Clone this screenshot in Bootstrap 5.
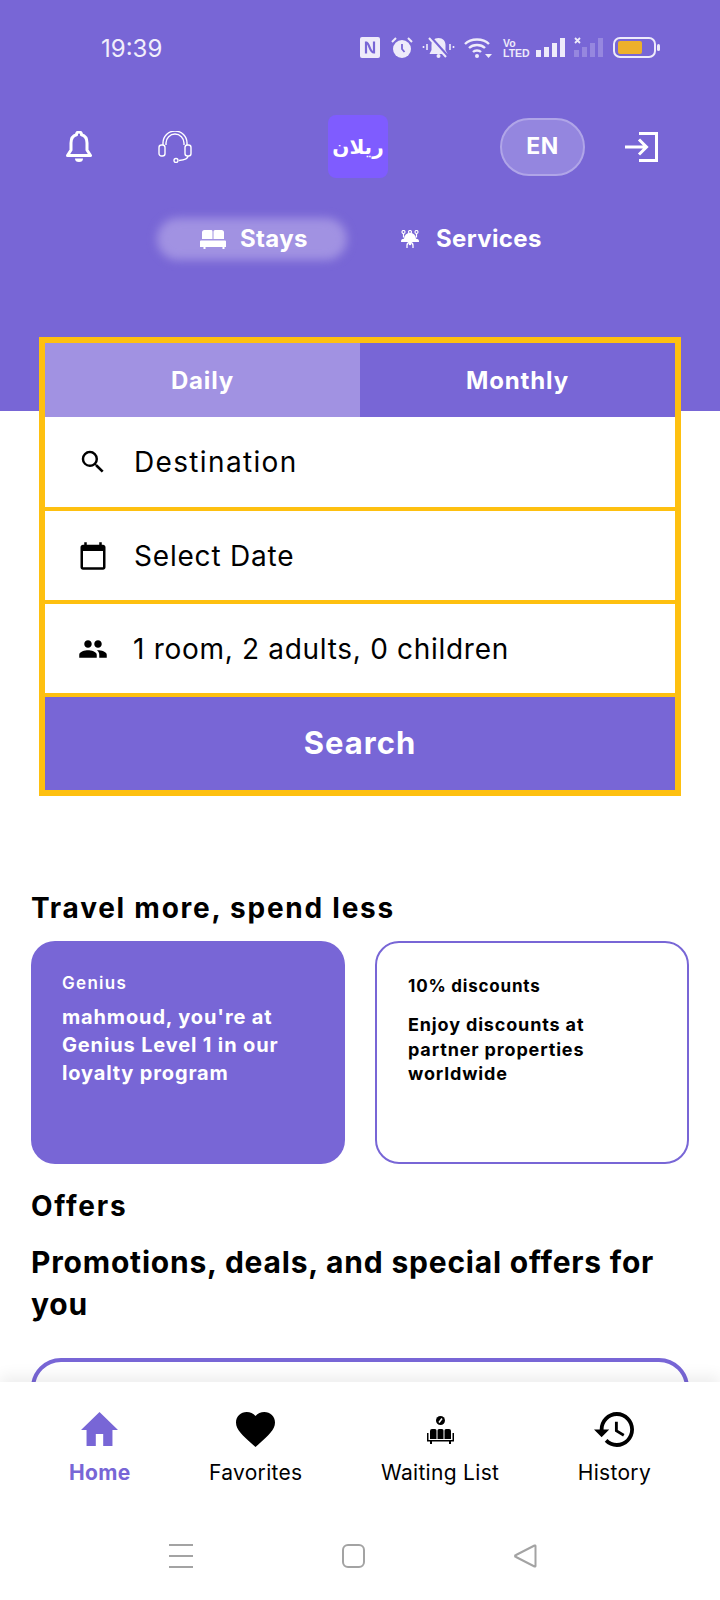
<!DOCTYPE html>
<html lang="en">
<head>
  <meta charset="UTF-8">
  <meta name="viewport" content="width=device-width, initial-scale=1.0">
  <title>Stays</title>
  <link rel="stylesheet" href="https://cdn.jsdelivr.net/npm/bootstrap@5.3.0/dist/css/bootstrap.min.css">
  <style>
    :root { --violet: #7866d6; --violet-light: #a192e2; --amber: #fec010; }
    body { font-family: Inter, "Open Sans", sans-serif; background: #fff; color: #000; }
    .app-shell { width: 720px; height: 1600px; overflow: hidden; }
    .app-main { flex: 1 1 auto; min-height: 0; overflow: hidden; }
    .hero { height: 411px; background: var(--violet); color: #fff; }
    .status-row { padding: 37px 60px 0 101px; height: 58px; }
    .status-time { font-size: 24px; line-height: 22px; width: 259px; padding-top: 2px; color: #f1eefb; flex: none; }
    .status-row svg { display: block; flex: none; }
    .lte-mark { width: 23px; margin-left: 11px; font: 700 10.500px/10px "Liberation Sans", sans-serif; color: #eeebfa; }
    .top-row { padding-left: 66px; margin-top: 57px; height: 63px; }
    .ic-bell { width: 26px; height: 31px; }
    .ic-headset { width: 34px; height: 32px; margin-left: 66px; }
    .logo-box { width: 60px; height: 63px; margin-left: 136px; background: #7f5cff; border-radius: 8px; font: 700 20px/1 "DejaVu Sans", sans-serif; }
    .lang-pill { width: 85px; height: 58px; margin-left: 112px; border-radius: 29px; background: #9486df; border: 2px solid #b0a5e8; font-size: 23px; font-weight: 700; letter-spacing: .6px; }
    .ic-login { width: 33px; height: 30px; margin-left: 40px; }
    .type-row { padding-left: 157px; margin-top: 39px; height: 44px; font-size: 24px; font-weight: 700; letter-spacing: .35px; }
    .type-on { position: relative; width: 190px; height: 44px; padding-left: 43px; gap: 14px; }
    .type-on::before { content: ""; position: absolute; inset: 1px 0; border-radius: 22px; background: var(--violet-light); filter: blur(5px); }
    .type-on > * { position: relative; }
    .type-off { margin-left: 53px; gap: 16px; }
    .search-box { width: 642px; margin: -74px 0 0 39px; border: 6px solid var(--amber); position: relative; background: #fff; }
    .term-tab { width: 50%; height: 74px; padding-top: 2px; background: var(--violet); color: #fff; font-size: 24px; font-weight: 700; letter-spacing: .85px; }
    .term-tab.on { background: var(--violet-light); }
    .field-row { height: 94px; padding-left: 33px; font-size: 28px; gap: 26px; border-bottom: 4px solid var(--amber); letter-spacing: 1.350px; }
    .field-row.slim { height: 93px; letter-spacing: .8px; }
    .field-row.tight { letter-spacing: .7px; gap: 25px; }
    .field-ico { width: 30px; display: flex; justify-content: center; flex: none; }
    .go-btn { height: 93px; background: var(--violet); color: #fff; font-size: 31px; font-weight: 700; border: 0; border-radius: 0; letter-spacing: 1px; }
    .go-btn:hover { background: var(--violet); color: #fff; }
    .sect { padding: 0 31px; margin-top: 95px; }
    .sect-title { font-size: 28px; line-height: 34px; font-weight: 700; margin: 0; letter-spacing: 1.750px; }
    .sect-title.next { margin-top: 25px; }
    .perk-grid { gap: 30px; margin-top: 16px; }
    .perk { width: 314px; height: 223px; border-radius: 24px; font-weight: 700; }
    .perk-fill { background: var(--violet); color: #fff; padding: 30px 31px; }
    .perk-line { border: 2px solid var(--violet); padding: 31px 40px 31px 31px; }
    .perk-tag { font-size: 17px; line-height: 24px; margin-bottom: 8px; font-weight: 600; letter-spacing: 1.300px; }
    .perk-line .perk-tag { margin-bottom: 15px; font-weight: 700; letter-spacing: .8px; }
    .perk-body { font-size: 20px; line-height: 28px; letter-spacing: .85px; }
    .perk-line .perk-body { font-size: 18px; line-height: 24.500px; letter-spacing: .85px; }
    .promo-title { font-size: 30px; line-height: 42px; font-weight: 700; margin: 18px 0 0; letter-spacing: .8px; }
    .promo-card { height: 120px; margin-top: 33px; border: 4px solid var(--violet); border-radius: 30px; }
    .tabbar { flex: none; height: 218px; background: #fff; box-shadow: 0 -6px 14px rgba(0, 0, 0, .07); position: relative; }
    .tab-list { padding: 30px 69px 0 69px; }
    .tab-item { font-size: 21px; line-height: 24px; letter-spacing: .3px; }
    .tab-item svg { display: block; }
    .tab-ico { height: 36px; margin-bottom: 13px; }
    .tab-item.on { color: var(--violet); font-weight: 700; }
    .sys-nav { padding-left: 169px; margin-top: 59px; }
    .sys-nav svg { display: block; flex: none; }
    .sys-gap { margin-left: 149px; }
  </style>
</head>
<body>
  <div class="app-shell d-flex flex-column">
    <div class="app-main">
      <div class="hero">
        <div class="status-row d-flex align-items-center">
          <div class="status-time">19:39</div>
          <svg width="20" height="21" viewBox="0 0 20 21"><rect width="20" height="21" rx="2" fill="#eeebfa"/><path d="M6 4.500v12M6 5.500c4 0 3 10 8 10M14 4.500v12" stroke="#7866d6" stroke-width="2.200" fill="none"/></svg>
          <svg style="margin-left:11px" width="22" height="21" viewBox="0 0 22 21"><circle cx="11" cy="12" r="9" fill="#eeebfa"/><path d="M11 7v5l2.500 3" stroke="#7866d6" stroke-width="1.800" fill="none"/><path d="M1 5l4-4M21 5l-4-4" stroke="#eeebfa" stroke-width="2"/></svg>
          <svg style="margin-left:9px" width="33" height="21" viewBox="0 0 33 21"><path d="M16.500 1c-4.500 0-7 3-7 7v5l-2 4h18l-2-4V8c0-4-2.500-7-7-7z" fill="#eeebfa"/><circle cx="16.500" cy="19" r="2" fill="#eeebfa"/><path d="M8 0l17 19" stroke="#7866d6" stroke-width="3.500"/><path d="M7 1l17 19" stroke="#eeebfa" stroke-width="2"/><path d="M5 7v6M1.500 9v2M28 7v6M31.500 9v2" stroke="#eeebfa" stroke-width="1.600"/></svg>
          <svg style="margin-left:9px" width="28" height="21" viewBox="0 0 28 21"><path d="M1 7c6-6 18-6 24 0M5 11c4-4 12-4 16 0M9 15c2-2 6-2 8 0" stroke="#eeebfa" stroke-width="2.400" fill="none"/><circle cx="13" cy="19" r="2" fill="#eeebfa"/><path d="M21 17h7l-3.500 4z" fill="#eeebfa"/></svg>
          <div class="lte-mark">Vo<br>LTED</div>
          <svg style="margin-left:10px" width="29" height="21" viewBox="0 0 29 21"><path d="M0 13h5v7H0zM8 10h5v10H8zM16 6h5v14h-5zM24 1h5v19h-5z" fill="#eeebfa"/></svg>
          <svg style="margin-left:9px" width="29" height="21" viewBox="0 0 29 21"><path d="M0 13h5v7H0zM8 10h5v10H8zM16 6h5v14h-5zM24 1h5v19h-5z" fill="#eeebfa" opacity=".25"/><path d="M1 1l5 5M6 1L1 6" stroke="#eeebfa" stroke-width="1.800"/></svg>
          <svg style="margin-left:10px" width="47" height="21" viewBox="0 0 47 21"><rect x="1" y="1" width="41" height="19" rx="6" fill="none" stroke="#eeebfa" stroke-width="2"/><rect x="5" y="4" width="24" height="13" rx="2" fill="#edb02a"/><rect x="44" y="7" width="3" height="7" rx="1.500" fill="#eeebfa"/></svg>
        </div>

        <div class="top-row d-flex align-items-center">
          <svg class="ic-bell" viewBox="0 0 26 31"><path d="M13 1a2.500 2.500 0 0 1 2.500 2.800c3.800 1 5.500 4.200 5.500 8.200v7l3.500 5.500h-23L5 19v-7c0-4 1.700-7.200 5.500-8.200A2.500 2.500 0 0 1 13 1z" fill="none" stroke="#fff" stroke-width="3" stroke-linejoin="round"/><path d="M9 27.500h8a4 3.500 0 0 1-8 0z" fill="#fff"/></svg>
          <svg class="ic-headset" viewBox="0 0 34 32"><g fill="none" stroke="#fff" stroke-width="1.400"><path d="M5 14V12a12 12 0 0 1 24 0v2"/><path d="M8 14v-2a9 9 0 0 1 18 0v2"/><rect x="1" y="14" width="6" height="11" rx="2.500"/><rect x="27" y="14" width="6" height="11" rx="2.500"/><path d="M30 25c0 3-4 4-9 4.500"/><circle cx="18" cy="29.500" r="2"/></g></svg>
          <div class="logo-box d-flex align-items-center justify-content-center" dir="rtl">ريلان</div>
          <div class="lang-pill d-flex align-items-center justify-content-center">EN</div>
          <svg class="ic-login" viewBox="0 0 33 30"><g fill="none" stroke="#fff" stroke-width="3"><path d="M14 1.500h17.500v27H14"/><path d="M0 15h21M14 7.500l7.500 7.500-7.500 7.500"/></g></svg>
        </div>

        <div class="type-row d-flex align-items-center">
          <div class="type-on d-flex align-items-center">
            <svg width="26" height="19" viewBox="0 0 26 19"><path fill="#fff" d="M2 2.500A2.500 2.500 0 0 1 4.500 0h7A1.500 1.500 0 0 1 12.500 1.500V9H2zM13.500 1.500A1.500 1.500 0 0 1 15 0h6.500A2.500 2.500 0 0 1 24 2.500V9H13.500zM1 10.500h24a1 1 0 0 1 1 1V17h-1.500v2h-2v-2h-17v2h-2v-2H0v-5.500a1 1 0 0 1 1-1z"/></svg>
            <span>Stays</span>
          </div>
          <div class="type-off d-flex align-items-center">
            <svg width="20" height="18" viewBox="0 0 20 18"><g fill="none" stroke="#fff" stroke-width="1.200"><circle cx="3.500" cy="2" r="1.500"/><circle cx="10" cy="2" r="1.500"/><circle cx="16.500" cy="2" r="1.500"/><path d="M3.500 3.500v4M10 3.500v3M16.500 3.500v4"/></g><path fill="#fff" d="M1 12a3 3 0 0 1 3-3.200A6 6 0 0 1 16 8.800a3 3 0 0 1 3 3.200z"/><path fill="none" stroke="#fff" stroke-width="1.300" d="M7 18v-2.500a3 3 0 0 1 6 0V18"/><circle cx="10" cy="14" r="1.300" fill="#fff"/></svg>
            <span>Services</span>
          </div>
        </div>
      </div>

      <div class="search-box">
        <div class="d-flex">
          <div class="term-tab on d-flex align-items-center justify-content-center">Daily</div>
          <div class="term-tab d-flex align-items-center justify-content-center">Monthly</div>
        </div>
        <div class="field-row d-flex align-items-center">
          <span class="field-ico"><svg width="34" height="34" viewBox="0 0 24 24"><path d="M15.500 14h-.79l-.28-.27A6.471 6.471 0 0 0 16 9.500 6.500 6.500 0 1 0 9.500 16c1.610 0 3.090-.59 4.230-1.570l.27.28v.79l5 4.990L20.490 19l-4.990-5zm-6 0C7.010 14 5 11.990 5 9.500S7.010 5 9.500 5 14 7.010 14 9.500 11.990 14 9.500 14z"/></svg></span>
          <span>Destination</span>
        </div>
        <div class="field-row slim d-flex align-items-center">
          <span class="field-ico"><svg width="36" height="36" viewBox="0 0 24 24"><path d="M20 3h-1V1h-2v2H7V1H5v2H4c-1.100 0-2 .9-2 2v16c0 1.100.9 2 2 2h16c1.100 0 2-.9 2-2V5c0-1.100-.9-2-2-2zm0 18H4V8h16v13z"/></svg></span>
          <span>Select Date</span>
        </div>
        <div class="field-row slim tight d-flex align-items-center">
          <span class="field-ico"><svg width="36" height="36" viewBox="0 0 24 24"><path d="M16 11c1.660 0 2.990-1.340 2.990-3S17.660 5 16 5c-1.660 0-3 1.340-3 3s1.340 3 3 3zm-8 0c1.660 0 2.990-1.340 2.990-3S9.660 5 8 5C6.340 5 5 6.340 5 8s1.340 3 3 3zm0 2c-2.330 0-7 1.170-7 3.500V19h14v-2.500c0-2.330-4.670-3.500-7-3.500zm8 0c-.29 0-.62.02-.97.05 1.160.84 1.970 1.970 1.970 3.450V19h6v-2.500c0-2.330-4.670-3.500-7-3.500z"/></svg></span>
          <span>1 room, 2 adults, 0 children</span>
        </div>
        <button type="button" class="btn go-btn w-100 d-block">Search</button>
      </div>

      <div class="sect">
        <h2 class="sect-title">Travel more, spend less</h2>
        <div class="perk-grid d-flex">
          <div class="perk perk-fill">
            <div class="perk-tag">Genius</div>
            <div class="perk-body">mahmoud, you're at Genius Level 1 in our loyalty program</div>
          </div>
          <div class="perk perk-line">
            <div class="perk-tag">10% discounts</div>
            <div class="perk-body">Enjoy discounts at partner properties worldwide</div>
          </div>
        </div>
        <h2 class="sect-title next">Offers</h2>
        <h2 class="promo-title">Promotions, deals, and special offers for you</h2>
        <div class="promo-card"></div>
      </div>
    </div>

    <div class="tabbar">
      <div class="tab-list d-flex justify-content-between">
        <div class="tab-item on d-flex flex-column align-items-center">
          <div class="tab-ico"><svg width="37" height="34" viewBox="2 3 20 17" preserveAspectRatio="none"><path fill="#7866d6" d="M10 20v-6h4v6h5v-8h3L12 3 2 12h3v8z"/></svg></div>
          <span>Home</span>
        </div>
        <div class="tab-item d-flex flex-column align-items-center">
          <div class="tab-ico"><svg width="39" height="35" viewBox="2 3 20 18.350" preserveAspectRatio="none"><path d="M12 21.350l-1.450-1.320C5.400 15.360 2 12.280 2 8.500 2 5.420 4.420 3 7.500 3c1.740 0 3.410.81 4.500 2.090C13.090 3.810 14.760 3 16.500 3 19.580 3 22 5.420 22 8.500c0 3.780-3.400 6.860-8.550 11.540L12 21.350z"/></svg></div>
          <span>Favorites</span>
        </div>
        <div class="tab-item d-flex flex-column align-items-center">
          <div class="tab-ico"><svg width="27" height="28" viewBox="0 0 27 28" style="margin-top:4px"><circle cx="13.500" cy="4.500" r="4.500"/><path d="M15 2.500l-3 4" stroke="#fff" stroke-width="1.500"/><path d="M3 15a2 2 0 0 1 2-2h3a1.500 1.500 0 0 1 1.500 1.500V23H3zM10.500 14.500A1.500 1.500 0 0 1 12 13h3a1.500 1.500 0 0 1 1.500 1.500V23h-6zM17.500 14.500A1.500 1.500 0 0 1 19 13h3a2 2 0 0 1 2 2v8h-6.500z"/><path d="M0 17h1.500v7h24v-7H27v8.500H24V28h-2v-2.500H5V28H3v-2.500H0z"/></svg></div>
          <span>Waiting List</span>
        </div>
        <div class="tab-item d-flex flex-column align-items-center">
          <div class="tab-ico"><svg width="40" height="35" viewBox="1 3 21 18" preserveAspectRatio="none"><path d="M13 3c-4.970 0-9 4.030-9 9H1l3.890 3.890.07.14L9 12H6c0-3.870 3.130-7 7-7s7 3.130 7 7-3.130 7-7 7c-1.930 0-3.680-.79-4.940-2.060l-1.420 1.420C8.270 19.990 10.510 21 13 21c4.970 0 9-4.030 9-9s-4.030-9-9-9zm-1 5v5l4.280 2.540.72-1.210-3.500-2.080V8H12z"/></svg></div>
          <span>History</span>
        </div>
      </div>
      <div class="sys-nav d-flex align-items-center">
        <svg width="24" height="24" viewBox="0 0 24 24"><path d="M0 1h24M0 12h24M0 23h24" stroke="#a3a3a3" stroke-width="2"/></svg>
        <svg class="sys-gap" width="23" height="24" viewBox="0 0 23 24"><rect x="1" y="1" width="21" height="22" rx="5" fill="none" stroke="#a3a3a3" stroke-width="2"/></svg>
        <svg class="sys-gap" width="23" height="24" viewBox="0 0 23 24"><path d="M21.500 2v20a.7.7 0 0 1-1 .5L2 13a1 1 0 0 1 0-2l18.500-9.500a.7.7 0 0 1 1 .5z" fill="none" stroke="#a3a3a3" stroke-width="2" stroke-linejoin="round"/></svg>
      </div>
    </div>
  </div>
  <script src="https://cdn.jsdelivr.net/npm/bootstrap@5.3.0/dist/js/bootstrap.bundle.min.js"></script>
</body>
</html>
